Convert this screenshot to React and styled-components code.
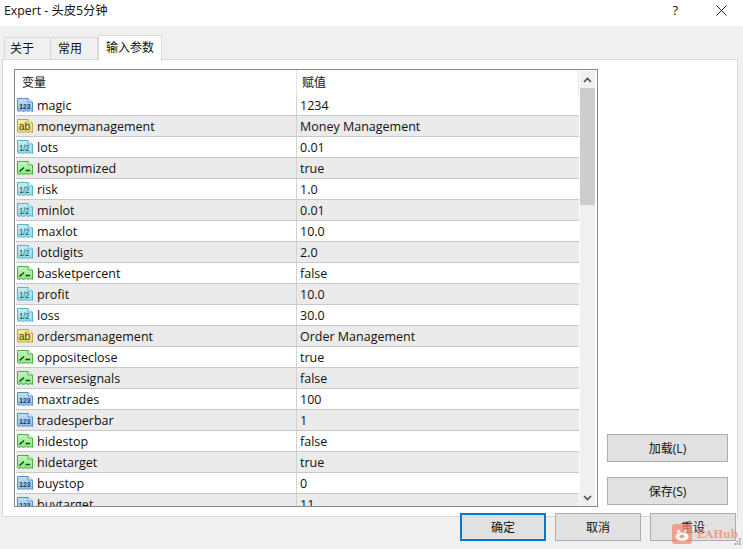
import React from 'react';
import styled, { createGlobalStyle } from 'styled-components';

const GlobalStyle = createGlobalStyle`
    html, body {
        margin : 0;
        padding : 0;
        background : #f0f0f0;
    }
    * { box-sizing : border-box; }
`;

const FONT = `"Open Sans", "Noto Sans CJK SC", sans-serif`;

const Window = styled.div`
    position : relative;
    width : 743px;
    height : 549px;
    overflow : hidden;
    background : #f0f0f0;
    color : #111;
    font-family : ${FONT};
    font-size : 12.5px;
    display : flex;
    flex-direction : column;
`;

const TitleBar = styled.div`
    height : 26px;
    flex : none;
    background : #fff;
    display : flex;
    align-items : center;
    justify-content : space-between;
    padding : 0 16px 6px 4px;
    font-size : 12.3px;
`;

const TitleButtons = styled.div`
    display : flex;
    align-items : center;
    gap : 38px;
`;

const HelpMark = styled.span`
    font-size : 13px;
`;

const TabStrip = styled.div`
    height : 34px;
    flex : none;
    display : flex;
    align-items : flex-end;
    padding-left : 4px;
    position : relative;
    z-index : 1;
    font-size : 12px;
`;

const Tab = styled.div`
    width : ${p => p.$w}px;
    height : ${p => p.$active ? 26 : 23}px;
    display : flex;
    align-items : center;
    padding : 0 0 ${p => p.$active ? 3 : 2}px ${p => p.$pad}px;
    background : ${p => p.$active ? '#fff' : '#f0f0f0'};
    border : 1px solid #d9d9d9;
    border-left : ${p => p.$first || p.$active ? '1px solid #d9d9d9' : 'none'};
    border-bottom : ${p => p.$active ? 'none' : '1px solid #d9d9d9'};
    margin-bottom : ${p => p.$active ? -1 : 0}px;
`;

const Panel = styled.div`
    flex : none;
    width : 736px;
    height : 458px;
    margin-left : 2px;
    margin-top : -1px;
    background : #fff;
    border : 1px solid #d9d9d9;
    padding : 9px 0 0 11px;
    display : flex;
`;

const Table = styled.div`
    position : relative;
    width : 584px;
    height : 438px;
    flex : none;
    border : 1px solid #828790;
    overflow : hidden;
`;

const HeaderRow = styled.div`
    height : 25px;
    display : flex;
    background : #fff;
`;

const HeaderCell = styled.div`
    width : ${p => p.$w}px;
    padding : 1px 0 2px ${p => p.$pad}px;
    flex : none;
    display : flex;
    align-items : center;
    font-size : 12px;
    border-right : 1px solid #e4e4e4;
`;

const Row = styled.div`
    height : 21px;
    width : 563px;
    margin-left : 1px;
    display : flex;
    align-items : stretch;
    background : ${p => p.$alt ? '#ebebeb' : '#fff'};
    border-bottom : 1px solid #c8c8c8;
`;

const NameCell = styled.div`
    width : 281px;
    flex : none;
    display : flex;
    align-items : center;
    gap : 4px;
    padding-left : 1px;
    white-space : nowrap;
    border-right : 1px solid #d2d2d2;
    margin-right : 3px;
`;

const ValueCell = styled.div`
    display : flex;
    align-items : center;
    white-space : nowrap;
`;

const ScrollBar = styled.div`
    position : absolute;
    top : 1px;
    right : 2px;
    bottom : 0;
    width : 15px;
    background : #f0f0f0;
    display : flex;
    flex-direction : column;
    align-items : center;
`;

const ScrollArrow = styled.div`
    height : 17px;
    flex : none;
    display : flex;
    align-items : center;
    justify-content : center;
`;

const ScrollThumb = styled.div`
    width : 100%;
    height : 117px;
    flex : none;
    background : #cdcdcd;
`;

const ScrollGap = styled.div`
    flex : 1;
`;

const SidePanel = styled.div`
    width : 121px;
    margin-left : 9px;
    height : 436px;
    flex : none;
    display : flex;
    flex-direction : column;
    justify-content : flex-end;
    gap : 15px;
`;

const Button = styled.div`
    width : ${p => p.$w}px;
    height : 28px;
    display : flex;
    align-items : center;
    justify-content : center;
    padding-bottom : 1px;
    font-size : 12px;
    background : #e1e1e1;
    border : ${p => p.$primary ? '2px solid #0078d7' : '1px solid #adadad'};
    flex : none;
`;

const Footer = styled.div`
    display : flex;
    margin-top : -4px;
    padding-left : 460px;
    gap : 9px;
    position : relative;
`;

const Watermark = styled.div`
    position : absolute;
    left : 672px;
    top : 524px;
    display : flex;
    align-items : center;
    gap : 5px;
    color : #f58a70;
    font-family : "DejaVu Serif", serif;
    font-weight : bold;
    font-size : 10.5px;
    opacity : 0.75;
`;

const Grip = styled.svg`
    position : absolute;
    right : 1px;
    bottom : 3px;
`;

const ROWS = [
    ['int', 'magic', '1234'],
    ['str', 'moneymanagement', 'Money Management'],
    ['dbl', 'lots', '0.01'],
    ['bool', 'lotsoptimized', 'true'],
    ['dbl', 'risk', '1.0'],
    ['dbl', 'minlot', '0.01'],
    ['dbl', 'maxlot', '10.0'],
    ['dbl', 'lotdigits', '2.0'],
    ['bool', 'basketpercent', 'false'],
    ['dbl', 'profit', '10.0'],
    ['dbl', 'loss', '30.0'],
    ['str', 'ordersmanagement', 'Order Management'],
    ['bool', 'oppositeclose', 'true'],
    ['bool', 'reversesignals', 'false'],
    ['int', 'maxtrades', '100'],
    ['int', 'tradesperbar', '1'],
    ['bool', 'hidestop', 'false'],
    ['bool', 'hidetarget', 'true'],
    ['int', 'buystop', '0'],
    ['int', 'buytarget', '11'],
];

const ICONS = {
    int: { top: '#c4def6', low: '#8fbdea', edge: '#5b8fc9', ink: '#12305c' },
    str: { top: '#f6eca8', low: '#e8d872', edge: '#bfa94c', ink: '#4a3c08' },
    dbl: { top: '#c4eff5', low: '#8fdbe8', edge: '#58b4c8', ink: '#124a58' },
    bool: { top: '#c4f5bc', low: '#8fe686', edge: '#4fb04a', ink: '#0e4a12' },
};

function TypeIcon({ type }) {
    const c = ICONS[type];
    const grad = 'grad-' + type;
    return (
        <svg width="16" height="16" viewBox="0 0 16 16" style={{ flex: 'none' }}>
            <defs>
                <linearGradient id={grad} x1="0" y1="0" x2="0" y2="1">
                    <stop offset="0" stopColor={c.top} />
                    <stop offset="1" stopColor={c.low} />
                </linearGradient>
            </defs>
            <path d="M0.5 1.5H11L15.5 5V14.5L13.5 13.5L11.5 14.5L9 13.5L6.5 14.5L4 13.5L2 14.5L0.5 13.5Z" fill={`url(#${grad})`} stroke={c.edge} />
            <path d="M11 1.5V5H15.5" fill="#fff" stroke={c.edge} />
            {type === 'bool' && <path d="M2.5 11.5L7 7.5M8.5 10.5H13" stroke={c.ink} strokeWidth="1.5" fill="none" />}
            {type === 'int' && <text x="7.8" y="11.5" textAnchor="middle" fontSize="7.5" fontWeight="bold" fontFamily="Liberation Sans, sans-serif" fill={c.ink} textLength="11" lengthAdjust="spacingAndGlyphs">123</text>}
            {type === 'str' && <text x="7.5" y="12" textAnchor="middle" fontSize="10.5" fontFamily="Liberation Sans, sans-serif" fill={c.ink}>ab</text>}
            {type === 'dbl' && <text x="7.3" y="12" textAnchor="middle" fontSize="8.5" fontFamily="Liberation Sans, sans-serif" fill={c.ink} textLength="10" lengthAdjust="spacingAndGlyphs">1/2</text>}
        </svg>
    );
}

function App() {
    return (
        <Window>
            <GlobalStyle />
            <TitleBar>
                <span>Expert - 头皮5分钟</span>
                <TitleButtons>
                    <HelpMark>?</HelpMark>
                    <svg width="11" height="11" viewBox="0 0 11 11">
                        <path d="M0.5 0.5L10.5 10.5M10.5 0.5L0.5 10.5" stroke="#222" fill="none" />
                    </svg>
                </TitleButtons>
            </TitleBar>
            <TabStrip>
                <Tab $w={47} $pad={5} $first>关于</Tab>
                <Tab $w={47} $pad={7}>常用</Tab>
                <Tab $w={64} $pad={7} $active>输入参数</Tab>
            </TabStrip>
            <Panel>
                <Table>
                    <HeaderRow>
                        <HeaderCell $w={282} $pad={7}>变量</HeaderCell>
                        <HeaderCell $w={282} $pad={5}>赋值</HeaderCell>
                    </HeaderRow>
                    {ROWS.map(([type, name, value], i) => (
                        <Row key={name} $alt={i % 2 === 1}>
                            <NameCell><TypeIcon type={type} />{name}</NameCell>
                            <ValueCell>{value}</ValueCell>
                        </Row>
                    ))}
                    <ScrollBar>
                        <ScrollArrow>
                            <svg width="9" height="6" viewBox="0 0 9 6"><path d="M1 5L4.5 1.5L8 5" stroke="#505050" strokeWidth="1.6" fill="none" /></svg>
                        </ScrollArrow>
                        <ScrollThumb />
                        <ScrollGap />
                        <ScrollArrow>
                            <svg width="9" height="6" viewBox="0 0 9 6"><path d="M1 1L4.5 4.5L8 1" stroke="#505050" strokeWidth="1.6" fill="none" /></svg>
                        </ScrollArrow>
                    </ScrollBar>
                </Table>
                <SidePanel>
                    <Button $w={121}>加载(L)</Button>
                    <Button $w={121}>保存(S)</Button>
                </SidePanel>
            </Panel>
            <Footer>
                <Button $w={86} $primary>确定</Button>
                <Button $w={86}>取消</Button>
                <Button $w={86}>重设</Button>
            </Footer>
            <Watermark>
                <svg width="20" height="20" viewBox="0 0 20 20">
                    <rect width="20" height="20" rx="3" fill="#f58a70" />
                    <ellipse cx="10" cy="12.5" rx="6.5" ry="4.5" fill="#fff" />
                    <circle cx="6.5" cy="7" r="1.6" fill="#fff" />
                    <circle cx="13.5" cy="7" r="1.6" fill="#fff" />
                    <ellipse cx="10" cy="12.5" rx="2.6" ry="1.7" fill="#f58a70" />
                </svg>
                <span>EAHub</span>
            </Watermark>
            <Grip width="8" height="8" viewBox="0 0 8 8">
                <path d="M5 0h2v2H5zM2.5 2.5h2v2h-2zM5 2.5h2v2H5zM0 5h2v2H0zM2.5 5h2v2h-2zM5 5h2v2H5z" fill="#b8b8b8" />
            </Grip>
        </Window>
    );
}

export default App;
